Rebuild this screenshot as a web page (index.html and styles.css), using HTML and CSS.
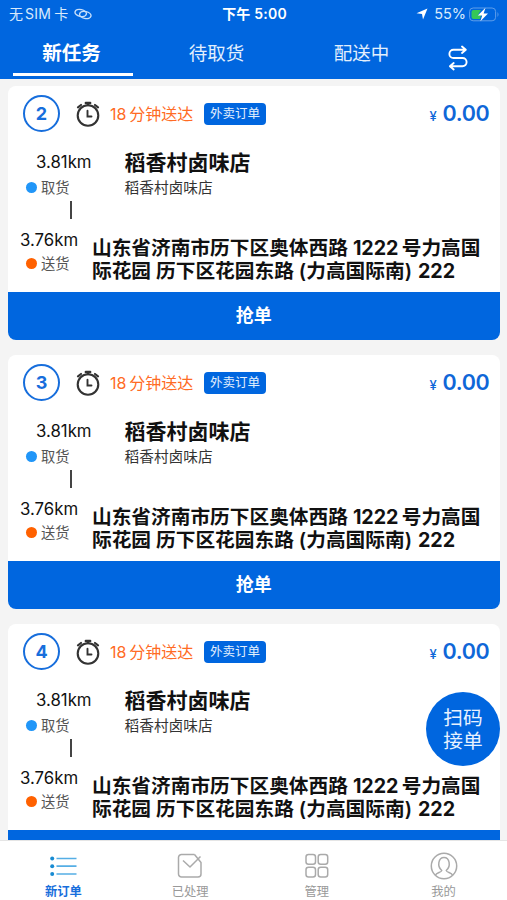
FILE: index.html
```html
<!DOCTYPE html>
<html lang="zh-CN">
<head>
<meta charset="utf-8">
<title>新任务</title>
<link rel="stylesheet" href="styles.css">
</head>
<body>
<svg class="defs" aria-hidden="true">
  <symbol id="clock" viewBox="0 0 26 26">
    <g fill="none" stroke="#333" stroke-linecap="round">
      <circle cx="13" cy="14.5" r="10.3" stroke-width="2.1"/>
      <path d="M10.8 2h4.400M13 2v2" stroke-width="2.400"/>
      <path d="M3 6.300 6 4M20 4l3 2.300" stroke-width="2.200"/>
      <path d="M12.500 9.800v5.700h4" stroke-width="1.900"/>
    </g>
  </symbol>
</svg>
<div class="screen">
  <header class="header">
    <div class="status">
      <div class="carrier"><span>无<i>SIM</i>卡</span>
        <svg width="18" height="12" viewBox="0 0 18 12" fill="none" stroke="#c7dffa" stroke-width="1.400"><ellipse cx="6.700" cy="5" rx="5.800" ry="3.500" transform="rotate(12 6.700 5)"/><ellipse cx="11.300" cy="7" rx="5.800" ry="3.500" transform="rotate(12 11.300 7)"/></svg>
      </div>
      <div class="time">下午 5:00</div>
      <div class="power">
        <svg width="12" height="12" viewBox="0 0 12 12"><path fill="#fff" d="M11.500.5 7 11.500 6 6 .5 5.300z"/></svg>
        <span>55%</span>
        <svg width="31" height="15" viewBox="0 0 31 15"><rect x=".6" y="1" width="26" height="12.800" rx="3.500" fill="none" stroke="#5f9eea"/><path fill="#35c759" d="M4.500 3H12l-3 5h3l-1 4H4.500Q2.500 12 2.500 10V5Q2.500 3 4.500 3"/><path fill="#fff" d="M16.500.8 8.800 8.500h4.400L11.400 14.300 19 6.500h-4.400z"/><path d="M28.500 5v5q2-2.500 0-5" fill="#5f9eea"/></svg>
      </div>
    </div>
    <nav class="tabs">
      <a class="tab active">新任务</a><a class="tab">待取货</a><a class="tab">配送中</a>
      <a class="swap"><svg width="22" height="26" viewBox="0 0 22 26" fill="none" stroke="#fff" stroke-width="1.900" stroke-linecap="round" stroke-linejoin="round"><path d="M18.500 4.800H6.500a4 4 0 0 0 0 8.200h9a4 4 0 0 1 0 8.200H3.500M15 1.500l3.800 3.300L15 8M6.700 18l-3.800 3.200 3.800 3.300"/></svg></a>
    </nav>
  </header>
  <main class="orders">
    <article class="card">
      <div class="card-head"><b class="number">2</b><svg class="clock"><use href="#clock"/></svg><span class="eta"><i>18</i>分钟送达</span><span class="tag">外卖订单</span><span class="price"><small>¥</small>0.00</span></div>
      <div class="pickup"><div class="leg"><div class="distance">3.81km</div><div class="stage"><i></i>取货</div></div><div class="shop"><h2>稻香村卤味店</h2><p>稻香村卤味店</p></div></div>
      <div class="connector"></div>
      <div class="dropoff"><div class="leg"><div class="distance">3.76km</div><div class="stage"><i></i>送货</div></div><div class="address">山东省济南市历下区奥体西路<span class="num">1222</span>号力高国<br>际花园 历下区花园东路<span class="bracket">(</span>力高国际南<span>)</span> <span class="unit">222</span></div></div>
      <button class="grab">抢单</button>
    </article>
    <article class="card">
      <div class="card-head"><b class="number">3</b><svg class="clock"><use href="#clock"/></svg><span class="eta"><i>18</i>分钟送达</span><span class="tag">外卖订单</span><span class="price"><small>¥</small>0.00</span></div>
      <div class="pickup"><div class="leg"><div class="distance">3.81km</div><div class="stage"><i></i>取货</div></div><div class="shop"><h2>稻香村卤味店</h2><p>稻香村卤味店</p></div></div>
      <div class="connector"></div>
      <div class="dropoff"><div class="leg"><div class="distance">3.76km</div><div class="stage"><i></i>送货</div></div><div class="address">山东省济南市历下区奥体西路<span class="num">1222</span>号力高国<br>际花园 历下区花园东路<span class="bracket">(</span>力高国际南<span>)</span> <span class="unit">222</span></div></div>
      <button class="grab">抢单</button>
    </article>
    <article class="card">
      <div class="card-head"><b class="number">4</b><svg class="clock"><use href="#clock"/></svg><span class="eta"><i>18</i>分钟送达</span><span class="tag">外卖订单</span><span class="price"><small>¥</small>0.00</span></div>
      <div class="pickup"><div class="leg"><div class="distance">3.81km</div><div class="stage"><i></i>取货</div></div><div class="shop"><h2>稻香村卤味店</h2><p>稻香村卤味店</p></div></div>
      <div class="connector"></div>
      <div class="dropoff"><div class="leg"><div class="distance">3.76km</div><div class="stage"><i></i>送货</div></div><div class="address">山东省济南市历下区奥体西路<span class="num">1222</span>号力高国<br>际花园 历下区花园东路<span class="bracket">(</span>力高国际南<span>)</span> <span class="unit">222</span></div></div>
      <div class="grab"></div>
    </article>
  </main>
  <nav class="bottom">
    <a class="item current"><svg width="28" height="28" viewBox="0 0 28 28"><path d="M7.500 6.500h20M7.500 14.200h20M7.500 22h20" stroke="#55aee5" stroke-width="1.700"/><g fill="#188bd2"><circle cx="3.200" cy="6.500" r="2"/><circle cx="3.200" cy="14.200" r="2"/><circle cx="3.200" cy="22" r="2"/></g></svg><span>新订单</span></a>
    <a class="item"><svg width="28" height="28" viewBox="0 0 28 28"><path d="M18.500 2.500H5.500a3 3 0 0 0-3 3v16.500a3 3 0 0 0 3 3h16.500a3 3 0 0 0 3-3V10.500l-6.500-8M7 8.500l7 6.500L24.500 4.500"/></svg><span>已处理</span></a>
    <a class="item"><svg width="28" height="28" viewBox="0 0 28 28"><rect x="3" y="2.500" width="9.500" height="9.800" rx="2.500"/><rect x="15.200" y="2.500" width="9.500" height="9.800" rx="2.500"/><rect x="3" y="15.200" width="9.500" height="9.800" rx="2.500"/><rect x="15.200" y="15.200" width="9.500" height="9.800" rx="2.500"/></svg><span>管理</span></a>
    <a class="item"><svg width="28" height="28" viewBox="0 0 28 28"><circle cx="14" cy="14" r="12.700"/><path d="M5.500 23c1-2.500 6-2.500 6.300-4.500-5-4-3.500-13 2.200-13s7.200 9 2.200 13c.3 2 5.300 2 6.300 4.500"/></svg><span>我的</span></a>
  </nav>
  <button class="scan">扫码<br>接单</button>
</div>
</body>
</html>
```
FILE: styles.css
```css
* { box-sizing: border-box; }
body { margin: 0; background: #f4f4f4; font-family: Inter, "Noto Sans CJK SC", sans-serif; color: #111; }
i { font-style: normal; }
button { border: 0; padding: 0; font-family: inherit; }
.defs { display: none; }
.screen { position: relative; display: flex; flex-direction: column; height: 900px; overflow: hidden; }
.header { flex: none; height: 79px; background: #0066df; color: #fff; }
.status { display: grid; grid-template-columns: 1fr auto 1fr; align-items: center; height: 28px; padding: 0 7px 0 9px; font-size: 14px; line-height: 28px; }
.carrier, .power { display: flex; align-items: center; color: #d9eafc; }
.carrier { gap: 6px; }
.carrier i { margin: 0 3px 0 2px; letter-spacing: .3px; }
.time { font-weight: 600; letter-spacing: .2px; white-space: nowrap; }
.power { justify-content: flex-end; }
.power span { margin: 0 3px 0 6px; font-size: 14.500px; }
.tabs { display: flex; height: 51px; padding-left: 13px; }
.tab { width: 120px; margin-right: 25px; height: 48px; padding-right: 3px; text-align: center; font-size: 18.500px; line-height: 50px; color: #e2effd; }
.tab:nth-child(3) { margin-right: 0; }
.tab.active { font-weight: 600; font-size: 19.500px; color: #fff; border-bottom: 3px solid #fff; }
.swap { margin: 17px 0 0 24px; }
.swap svg { display: block; }
.orders { flex: 1; min-height: 0; overflow: hidden; padding: 7px 7.500px 0 8px; display: flex; flex-direction: column; gap: 15px; }
.card { flex: none; height: 254px; background: #fff; border-radius: 8px; overflow: hidden; display: flex; flex-direction: column; }
.card-head { display: flex; align-items: center; height: 55px; padding: 0 10px 0 15px; }
.number { width: 37px; height: 37px; border: 2px solid #176edc; border-radius: 50%; color: #176edc; text-align: center; font-size: 18px; line-height: 33px; font-weight: 700; }
.clock { width: 26px; height: 26px; margin-left: 15px; }
.eta { margin: -2px 0 0 9px; width: 84px; color: #ff6b24; font-size: 16px; white-space: nowrap; }
.eta i { margin-right: 3px; letter-spacing: -.1px; }
.tag { margin-left: 10px; width: 62px; height: 22px; border-radius: 4px; background: #0066df; color: #e2effd; text-align: center; font-size: 12.500px; line-height: 22px; }
.price { margin: -1px 0 0 auto; color: #0f67d8; font-size: 21.500px; font-weight: 600; letter-spacing: -.3px; }
.price small { margin-right: 6px; font-size: 13px; font-weight: 500; }
.pickup { display: flex; height: 59px; padding-top: 9px; }
.pickup .leg { width: 116.500px; }
.distance { font-size: 16.800px; line-height: 25px; }
.pickup .distance { padding-left: 28px; }
.stage { display: flex; align-items: center; gap: 4px; padding-left: 18px; height: 25px; font-size: 14.300px; line-height: 22px; color: #555; }
.stage i { width: 11px; height: 11px; border-radius: 50%; background: #2196f8; }
.shop h2 { margin: 0; font-size: 21px; line-height: 25px; font-weight: 600; }
.shop p { margin: 0; font-size: 14.700px; line-height: 26px; color: #333; }
.connector { width: 2px; height: 18px; margin: 1px 0 0 62px; background: #444; }
.dropoff { display: flex; height: 73px; padding-top: 9px; }
.dropoff .leg { width: 84px; }
.dropoff .distance { padding-left: 12px; line-height: 24px; }
.dropoff .stage { height: 23px; }
.dropoff .stage i { background: #ff6100; }
.address { padding-top: 9px; font-size: 19.700px; line-height: 23.300px; font-weight: 600; white-space: nowrap; }
.address .num { margin: 0 3.500px 0 5px; font-weight: 700; letter-spacing: -.1px; }
.address .bracket { margin-left: 5px; }
.address .unit { margin-left: 1px; font-weight: 700; }
.grab { height: 48px; background: #0066df; color: #fff; font-size: 18px; font-weight: 600; line-height: 48px; }
.bottom { flex: none; height: 60px; display: grid; grid-template-columns: repeat(4, 1fr); background: #fff; border-top: 1px solid #e5e5e5; }
.item { display: flex; flex-direction: column; align-items: center; padding-top: 11px; color: #999; font-size: 12.300px; line-height: 23px; }
.item svg { flex: none; fill: none; stroke: #aaa; stroke-width: 1.500; stroke-linejoin: round; }
.item.current { color: #176edc; font-weight: 600; }
.item.current svg { stroke: none; }
.scan { position: absolute; left: 426px; top: 692px; width: 74px; height: 74px; border-radius: 50%; background: #0066df; color: #e8f2ff; font-size: 19.700px; line-height: 23px; padding-top: 2px; }
```
